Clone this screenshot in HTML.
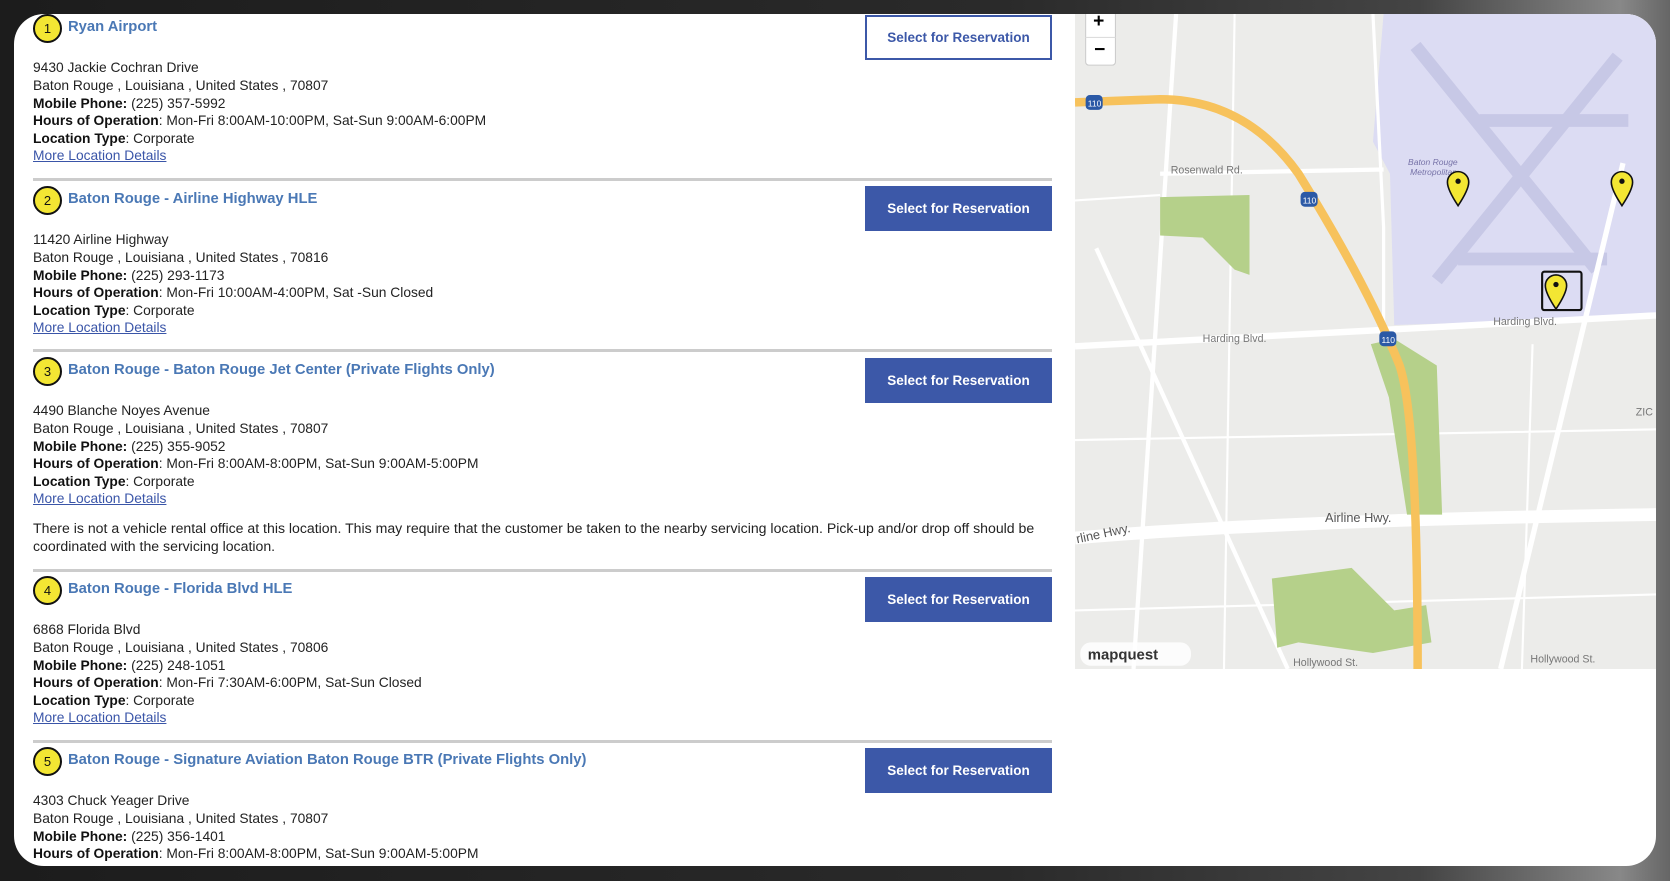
<!DOCTYPE html>
<html><head><meta charset="utf-8"><style>
html,body{margin:0;padding:0;width:1670px;height:881px;overflow:hidden;background:#1f1f1f;font-family:"Liberation Sans",sans-serif;}
.bg{position:absolute;left:0;top:0;width:1670px;height:881px;background:linear-gradient(90deg,#1c1c1c 0%,#2a2a2a 60%,#444 85%,#888 97%,#666 100%);}
.card{position:absolute;left:14px;top:14px;width:1642px;height:852px;background:#fff;border-radius:30px;overflow:hidden;}
.item{position:absolute;left:19px;width:1030px;color:#222;font-size:13.8px;}
.badge{position:absolute;left:0;width:25px;height:25px;border:2px solid #111;border-radius:50%;background:#f3e633;font-size:13px;text-align:center;line-height:25px;color:#111;}
.title{position:absolute;left:35px;color:#4a78b5;font-weight:bold;font-size:14.8px;white-space:nowrap;}
.line{position:absolute;left:0;white-space:nowrap;line-height:17.7px;}
b{font-weight:bold;color:#111}
a{color:#3a55a8;text-decoration:underline;}
.btn{position:absolute;left:851px;width:187px;height:45px;background:#3c58a8;color:#fff;font-weight:bold;font-size:13.5px;text-align:center;line-height:45px;box-sizing:border-box;}
.btn.o{background:#fff;color:#3c58a8;border:2px solid #3c58a8;line-height:41px;}
.sep{position:absolute;left:19px;width:1019px;height:3px;background:#ccc;}
.map{position:absolute;left:1061px;top:0;width:581px;height:655px;}
</style></head><body>
<div class="bg"></div>
<div class="card">
<div class="item" style="top:0">
 <div class="badge" style="top:0px">1</div>
 <div class="title" style="top:5px">Ryan Airport</div>
 <div class="line" style="top:45px">9430 Jackie Cochran Drive</div>
 <div class="line" style="top:63px">Baton Rouge , Louisiana , United States , 70807</div>
 <div class="line" style="top:81px"><b>Mobile Phone:</b> (225) 357-5992</div>
 <div class="line" style="top:98px"><b>Hours of Operation</b>: Mon-Fri 8:00AM-10:00PM, Sat-Sun 9:00AM-6:00PM</div>
 <div class="line" style="top:116px"><b>Location Type</b>: Corporate</div>
 <div class="line" style="top:133px"><a>More Location Details</a></div>
</div>
<div class="btn o" style="top:1px">Select for Reservation</div>
<div class="sep" style="top:164px"></div>

<div class="item" style="top:172px">
 <div class="badge" style="top:0px">2</div>
 <div class="title" style="top:5px">Baton Rouge - Airline Highway HLE</div>
 <div class="line" style="top:45px">11420 Airline Highway</div>
 <div class="line" style="top:63px">Baton Rouge , Louisiana , United States , 70816</div>
 <div class="line" style="top:81px"><b>Mobile Phone:</b> (225) 293-1173</div>
 <div class="line" style="top:98px"><b>Hours of Operation</b>: Mon-Fri 10:00AM-4:00PM, Sat -Sun Closed</div>
 <div class="line" style="top:116px"><b>Location Type</b>: Corporate</div>
 <div class="line" style="top:133px"><a>More Location Details</a></div>
</div>
<div class="btn" style="top:172px">Select for Reservation</div>
<div class="sep" style="top:335px"></div>

<div class="item" style="top:343px">
 <div class="badge" style="top:0px">3</div>
 <div class="title" style="top:5px">Baton Rouge - Baton Rouge Jet Center (Private Flights Only)</div>
 <div class="line" style="top:45px">4490 Blanche Noyes Avenue</div>
 <div class="line" style="top:63px">Baton Rouge , Louisiana , United States , 70807</div>
 <div class="line" style="top:81px"><b>Mobile Phone:</b> (225) 355-9052</div>
 <div class="line" style="top:98px"><b>Hours of Operation</b>: Mon-Fri 8:00AM-8:00PM, Sat-Sun 9:00AM-5:00PM</div>
 <div class="line" style="top:116px"><b>Location Type</b>: Corporate</div>
 <div class="line" style="top:133px"><a>More Location Details</a></div>
 <div class="line" style="top:163px;font-size:14.1px">There is not a vehicle rental office at this location. This may require that the customer be taken to the nearby servicing location. Pick-up and/or drop off should be</div>
 <div class="line" style="top:181px;font-size:14.1px">coordinated with the servicing location.</div>
</div>
<div class="btn" style="top:344px">Select for Reservation</div>
<div class="sep" style="top:555px"></div>

<div class="item" style="top:562px">
 <div class="badge" style="top:0px">4</div>
 <div class="title" style="top:5px">Baton Rouge - Florida Blvd HLE</div>
 <div class="line" style="top:45px">6868 Florida Blvd</div>
 <div class="line" style="top:63px">Baton Rouge , Louisiana , United States , 70806</div>
 <div class="line" style="top:81px"><b>Mobile Phone:</b> (225) 248-1051</div>
 <div class="line" style="top:98px"><b>Hours of Operation</b>: Mon-Fri 7:30AM-6:00PM, Sat-Sun Closed</div>
 <div class="line" style="top:116px"><b>Location Type</b>: Corporate</div>
 <div class="line" style="top:133px"><a>More Location Details</a></div>
</div>
<div class="btn" style="top:563px">Select for Reservation</div>
<div class="sep" style="top:726px"></div>

<div class="item" style="top:733px">
 <div class="badge" style="top:0px">5</div>
 <div class="title" style="top:5px">Baton Rouge - Signature Aviation Baton Rouge BTR (Private Flights Only)</div>
 <div class="line" style="top:45px">4303 Chuck Yeager Drive</div>
 <div class="line" style="top:63px">Baton Rouge , Louisiana , United States , 70807</div>
 <div class="line" style="top:81px"><b>Mobile Phone:</b> (225) 356-1401</div>
 <div class="line" style="top:98px"><b>Hours of Operation</b>: Mon-Fri 8:00AM-8:00PM, Sat-Sun 9:00AM-5:00PM</div>
</div>
<div class="btn" style="top:734px">Select for Reservation</div>

<svg class="map" viewBox="0 0 546 615" preserveAspectRatio="none" xmlns="http://www.w3.org/2000/svg">
 <rect width="546" height="615" fill="#ececea"/>
 <path d="M290 0 L546 0 L546 285 L300 292 L296 150 L280 120 Z" fill="#dcdcf3"/>
 <g stroke="#c7c8e6" stroke-width="12" fill="none">
  <path d="M320 30 L490 240"/><path d="M510 40 L340 250"/><path d="M380 100 L520 100"/><path d="M360 230 L500 230"/>
 </g>
 <g stroke="#fff" fill="none">
  <path d="M0 312 L546 283" stroke-width="6"/>
  <path d="M0 492 Q200 475 546 470" stroke-width="12"/>
  <path d="M95 0 L55 615" stroke-width="4"/>
  <path d="M20 220 L200 615" stroke-width="4"/>
  <path d="M515 140 L400 615" stroke-width="5"/>
  <path d="M80 150 L290 146" stroke-width="4"/>
  <path d="M280 0 L290 200 L290 300" stroke-width="3"/>
  <path d="M0 175 L80 170 M0 400 L546 390 M0 560 L546 545 M150 0 L140 615 M430 310 L420 615" stroke-width="2"/>
 </g>
 <g fill="#b5d08a">
  <path d="M80 172 L164 170 L164 245 L150 240 L120 210 L80 208 Z"/>
  <path d="M278 310 L300 305 L340 330 L345 470 L312 470 L295 360 Z"/>
  <path d="M185 530 L260 520 L300 560 L330 555 L335 590 L280 600 L210 590 L190 595 Z"/>
 </g>
 <path d="M0 83 L80 80 Q160 80 210 150 Q275 255 305 330 Q322 380 322 615" stroke="#f7c25c" stroke-width="8" fill="none"/>
 <g font-family="Liberation Sans,sans-serif" font-size="10" fill="#777">
  <text x="90" y="150">Rosenwald Rd.</text>
  <text x="120" y="308">Harding Blvd.</text>
  <text x="393" y="292">Harding Blvd.</text>
  <text x="235" y="477" font-size="12" fill="#555">Airline Hwy.</text>
  <text x="2" y="497" font-size="12" fill="#555" transform="rotate(-12 2 497)">rline Hwy.</text>
  <text x="205" y="612">Hollywood St.</text>
  <text x="428" y="609">Hollywood St.</text>
  <text x="527" y="377">ZIC</text>
  <text x="313" y="142" font-size="8" fill="#7773a8" font-style="italic">Baton Rouge</text>
  <text x="315" y="151" font-size="8" fill="#7773a8" font-style="italic">Metropolitan</text>
 </g>
 <g font-size="8" font-family="Liberation Sans,sans-serif">
  <rect x="10" y="76" width="16" height="14" rx="4" fill="#2b59a6"/><text x="12" y="87" fill="#fff">110</text>
  <rect x="212" y="167" width="16" height="14" rx="4" fill="#2b59a6"/><text x="214" y="178" fill="#fff">110</text>
  <rect x="286" y="298" width="16" height="14" rx="4" fill="#2b59a6"/><text x="288" y="309" fill="#fff">110</text>
 </g>
 <g fill="#f3e633" stroke="#111" stroke-width="1.5">
  <path d="M360 180 C352 168 350 162 350 158 A10 10 0 0 1 370 158 C370 162 368 168 360 180 Z"/>
  <path d="M514 180 C506 168 504 162 504 158 A10 10 0 0 1 524 158 C524 162 522 168 514 180 Z"/>
  <path d="M452 277 C444 265 442 259 442 255 A10 10 0 0 1 462 255 C462 259 460 265 452 277 Z"/>
 </g>
 <rect x="439" y="242" width="37" height="36" fill="none" stroke="#111" stroke-width="2" rx="2"/>
 <circle cx="360" cy="157" r="2.5" fill="#111"/><circle cx="514" cy="157" r="2.5" fill="#111"/><circle cx="452" cy="254" r="2.5" fill="#111"/>
 <rect x="10" y="-4" width="28" height="52" rx="3" fill="#fff" stroke="#ccc"/>
 <line x1="10" y1="22" x2="38" y2="22" stroke="#ddd"/>
 <text x="17" y="12" font-size="18" font-weight="bold" font-family="Liberation Sans,sans-serif">+</text>
 <text x="18" y="39" font-size="18" font-weight="bold" font-family="Liberation Sans,sans-serif">−</text>
 <rect x="5" y="590" width="104" height="22" rx="10" fill="#fff" opacity="0.85"/>
 <text x="12" y="606" font-size="14" font-weight="bold" font-family="Liberation Sans,sans-serif" fill="#333">mapquest</text>
</svg>
</div>
</body></html>
